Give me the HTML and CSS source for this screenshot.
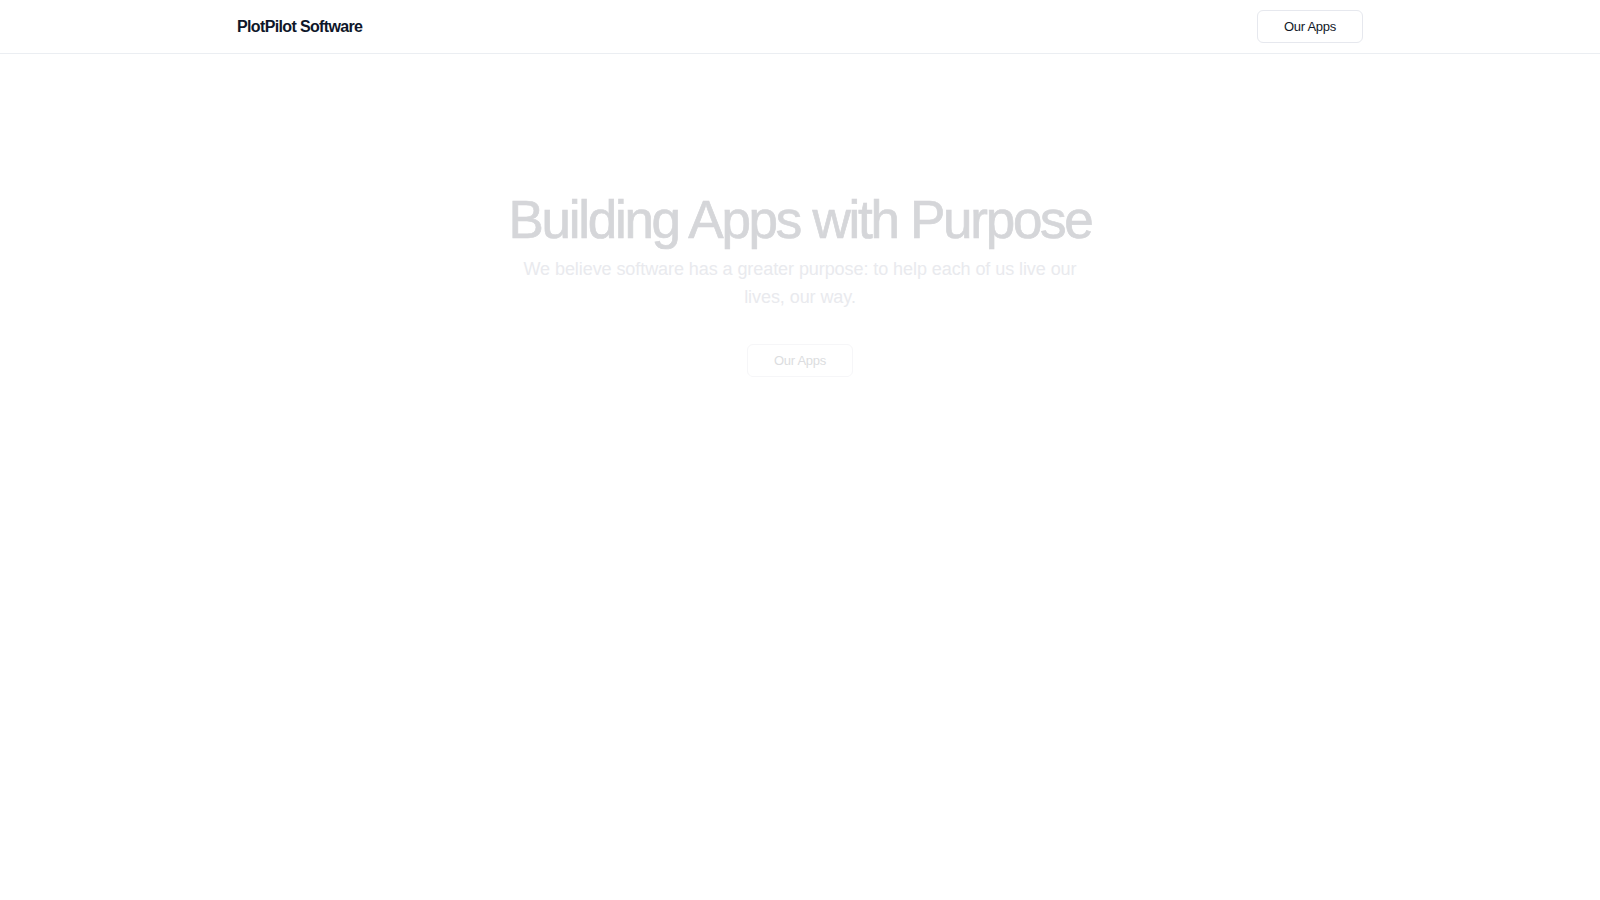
FILE: index.html
```html
<!DOCTYPE html>
<html lang="en">
<head>
<meta charset="utf-8">
<title>PlotPilot Software</title>
<link rel="stylesheet" href="styles.css">
</head>
<body>
<header class="site-header">
  <div class="container header-inner">
    <a class="logo" href="#">PlotPilot Software</a>
    <a class="btn" href="#">Our Apps</a>
  </div>
</header>
<main class="hero">
  <h1 class="hero-title">Building Apps with Purpose</h1>
  <p class="hero-sub">We believe software has a greater purpose: to help each of us live our lives, our way.</p>
  <a class="btn btn-faded" href="#">Our Apps</a>
</main>
</body>
</html>
```
FILE: styles.css
```css
* { box-sizing: border-box; }
html, body { margin: 0; padding: 0; background: #ffffff; }
body {
  font-family: "Liberation Sans", Arial, sans-serif;
  color: #111827;
}
a { text-decoration: none; color: inherit; }

.site-header {
  height: 54px;
  border-bottom: 1px solid #ebeef2;
}
.container {
  max-width: 1126px;
  margin: 0 auto;
}
.header-inner {
  height: 53px;
  display: flex;
  align-items: center;
  justify-content: space-between;
}
.logo {
  font-size: 16px;
  font-weight: 700;
  letter-spacing: -0.04em;
  color: #0f172a;
  margin-top: 1px;
}
.btn {
  display: inline-flex;
  align-items: center;
  justify-content: center;
  height: 33px;
  width: 106px;
  border: 1px solid #e6e8ee;
  border-radius: 6px;
  font-size: 13px;
  letter-spacing: -0.02em;
  color: #111827;
  background: #ffffff;
}

.hero {
  display: flex;
  flex-direction: column;
  align-items: center;
  text-align: center;
  padding-top: 137px;
}
.hero-title {
  margin: 0 0 6px;
  font-size: 53px;
  line-height: 58px;
  font-weight: 400;
  letter-spacing: -0.043em;
  color: #d5d6d9;
  -webkit-text-stroke: 0.7px #d5d6d9;
}
.hero-sub {
  margin: 0;
  max-width: 576px;
  font-size: 18px;
  line-height: 28px;
  letter-spacing: -0.004em;
  color: #e9eaee;
}
.btn-faded {
  margin-top: 33px;
  color: #dcdde0;
  border-color: #f6f6f8;
}
```
